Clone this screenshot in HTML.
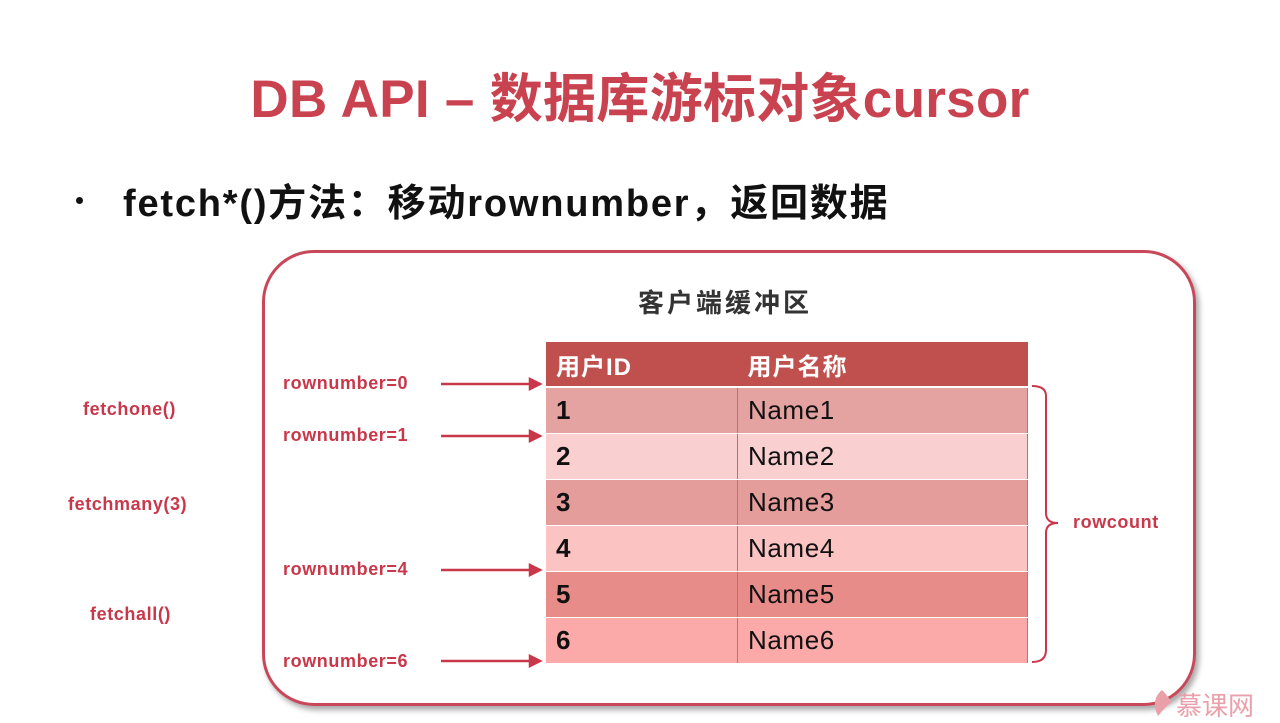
<!DOCTYPE html>
<html><head><meta charset="utf-8"><style>
body{margin:0;width:1280px;height:722px;background:#fff;position:relative;overflow:hidden;font-family:"Liberation Sans","Noto Sans CJK SC",sans-serif}
.a{position:absolute}
.t{left:0;width:1280px;top:57px;text-align:center;font-size:53px;font-weight:bold;color:#c9424f;letter-spacing:0.3px}
.b{left:123px;top:172px;font-size:38px;font-weight:bold;color:#111;letter-spacing:1.8px;white-space:nowrap}
.box{left:262px;top:250px;width:928px;height:450px;border:3px solid #c8485a;border-radius:52px;box-shadow:3px 4px 6px rgba(0,0,0,.35)}
.lbl{color:#c8384a;font-weight:bold;font-size:18px;letter-spacing:0.6px}
table{border-collapse:collapse;position:absolute;left:546px;top:342px;width:482px}
td{height:45px;font-size:26px;padding:0 0 0 10px;border-right:1px solid #c07070;border-bottom:1px solid #fff;color:#111;letter-spacing:0.6px}
td:first-child{width:181px;font-weight:bold}
th{height:44px;background:#c0504d;color:#fff;text-align:left;padding:0 0 0 10px;font-size:24px;letter-spacing:1px;border-bottom:2px solid #fff}
</style></head><body>
<div class="a t">DB API – 数据库游标对象cursor</div>
<div class="a" style="left:76px;top:197px;width:7px;height:7px;border-radius:50%;background:#111"></div>
<div class="a b">fetch*()方法：移动rownumber，返回数据</div>
<div class="a box"></div>
<div class="a" style="left:638px;top:283px;font-size:26px;font-weight:bold;color:#333;letter-spacing:3px">客户端缓冲区</div>
<table>
<tr><th>用户ID</th><th>用户名称</th></tr>
<tr style="background:#e4a2a1"><td>1</td><td>Name1</td></tr>
<tr style="background:#f9d0cf"><td>2</td><td>Name2</td></tr>
<tr style="background:#e59d9b"><td>3</td><td>Name3</td></tr>
<tr style="background:#fbc3c2"><td>4</td><td>Name4</td></tr>
<tr style="background:#e88c8a"><td>5</td><td>Name5</td></tr>
<tr style="background:#fcaaa9"><td>6</td><td>Name6</td></tr>
</table>
<div class="a lbl" style="left:283px;top:373px">rownumber=0</div>
<div class="a lbl" style="left:283px;top:425px">rownumber=1</div>
<div class="a lbl" style="left:283px;top:559px">rownumber=4</div>
<div class="a lbl" style="left:283px;top:651px">rownumber=6</div>
<div class="a lbl" style="left:83px;top:399px">fetchone()</div>
<div class="a lbl" style="left:68px;top:494px">fetchmany(3)</div>
<div class="a lbl" style="left:90px;top:604px">fetchall()</div>
<div class="a lbl" style="left:1073px;top:512px">rowcount</div>
<svg class="a" style="left:0;top:0" width="1280" height="722">
<g stroke="#c8384a" stroke-width="2.5" fill="#c8384a">
<line x1="441" y1="384" x2="532" y2="384"/><polygon points="540,384 530,379 530,389"/>
<line x1="441" y1="436" x2="532" y2="436"/><polygon points="540,436 530,431 530,441"/>
<line x1="441" y1="570" x2="532" y2="570"/><polygon points="540,570 530,565 530,575"/>
<line x1="441" y1="661" x2="532" y2="661"/><polygon points="540,661 530,656 530,666"/>
</g>
<path d="M1032 386 Q1046 386 1046 396 L1046 513 Q1046 523 1058 523 Q1046 523 1046 533 L1046 650 Q1046 662 1032 662" stroke="#c8384a" stroke-width="2" fill="none"/>
<path d="M1162 690 Q1150 700 1158 716 Q1166 706 1172 702 Q1166 694 1162 690Z" fill="#eaa0a8"/>
</svg>
<div class="a" style="left:1176px;top:686px;font-size:26px;color:#eaa0aa">慕课网</div>
</body></html>
